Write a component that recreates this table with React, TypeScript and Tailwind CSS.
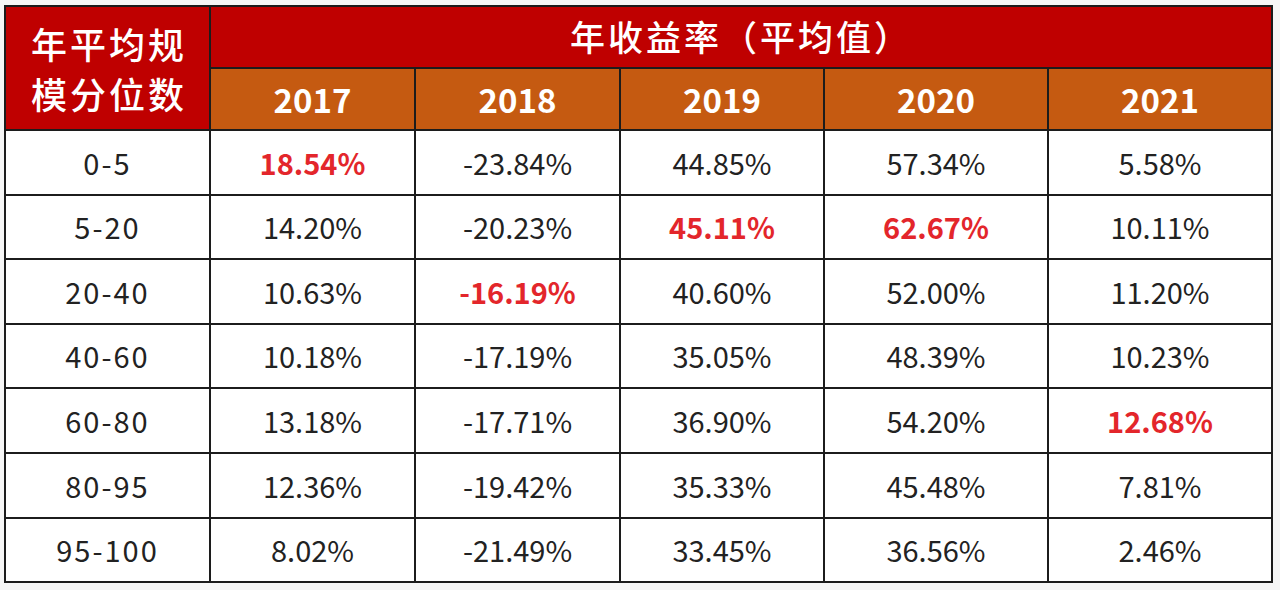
import React from "react";

const years = ["2017", "2018", "2019", "2020", "2021"];

type Cell = { v: string; hl?: boolean };
const rows: { label: string; cells: Cell[] }[] = [
  { label: "0-5", cells: [{ v: "18.54%", hl: true }, { v: "-23.84%" }, { v: "44.85%" }, { v: "57.34%" }, { v: "5.58%" }] },
  { label: "5-20", cells: [{ v: "14.20%" }, { v: "-20.23%" }, { v: "45.11%", hl: true }, { v: "62.67%", hl: true }, { v: "10.11%" }] },
  { label: "20-40", cells: [{ v: "10.63%" }, { v: "-16.19%", hl: true }, { v: "40.60%" }, { v: "52.00%" }, { v: "11.20%" }] },
  { label: "40-60", cells: [{ v: "10.18%" }, { v: "-17.19%" }, { v: "35.05%" }, { v: "48.39%" }, { v: "10.23%" }] },
  { label: "60-80", cells: [{ v: "13.18%" }, { v: "-17.71%" }, { v: "36.90%" }, { v: "54.20%" }, { v: "12.68%", hl: true }] },
  { label: "80-95", cells: [{ v: "12.36%" }, { v: "-19.42%" }, { v: "35.33%" }, { v: "45.48%" }, { v: "7.81%" }] },
  { label: "95-100", cells: [{ v: "8.02%" }, { v: "-21.49%" }, { v: "33.45%" }, { v: "36.56%" }, { v: "2.46%" }] },
];

const font = { fontFamily: '"Noto Sans CJK SC", "Noto Sans", sans-serif' };

export default function App() {
  return (
    <div className="w-[1280px] h-[590px] bg-[#f6f6f6] pt-[5px] pl-[4px]" style={font}>
      <div className="grid w-[1269px] grid-cols-[203px_203px_203px_202px_222px_222px] grid-rows-[60px_60px_repeat(7,62.6px)] gap-[2px] p-[2px] bg-[#1c1c1c]">
        <div className="row-span-2 bg-[#bf0000] flex flex-col items-center justify-center text-white text-[36px] font-medium leading-[50px] tracking-[3px] pl-[3px]">
          <span>年平均规</span>
          <span>模分位数</span>
        </div>
        <div className="col-span-5 bg-[#bf0000] flex items-center justify-center text-white text-[35px] font-medium tracking-[3px] pb-[2px]">
          年收益率（平均值）
        </div>
        {years.map((y) => (
          <div key={y} className="bg-[#c55a11] flex items-center justify-center text-white text-[33px] font-bold pt-[2px]">
            {y}
          </div>
        ))}
        {rows.map((r) => (
          <React.Fragment key={r.label}>
            <div className="bg-white flex items-center justify-center text-[#222] text-[29px] tracking-[2px]">{r.label}</div>
            {r.cells.map((c, i) => (
              <div
                key={i}
                className={
                  c.hl
                    ? "bg-white flex items-center justify-center text-[#e3262b] text-[29px] font-bold"
                    : "bg-white flex items-center justify-center text-[#222] text-[29px]"
                }
              >
                {c.v}
              </div>
            ))}
          </React.Fragment>
        ))}
      </div>
    </div>
  );
}
